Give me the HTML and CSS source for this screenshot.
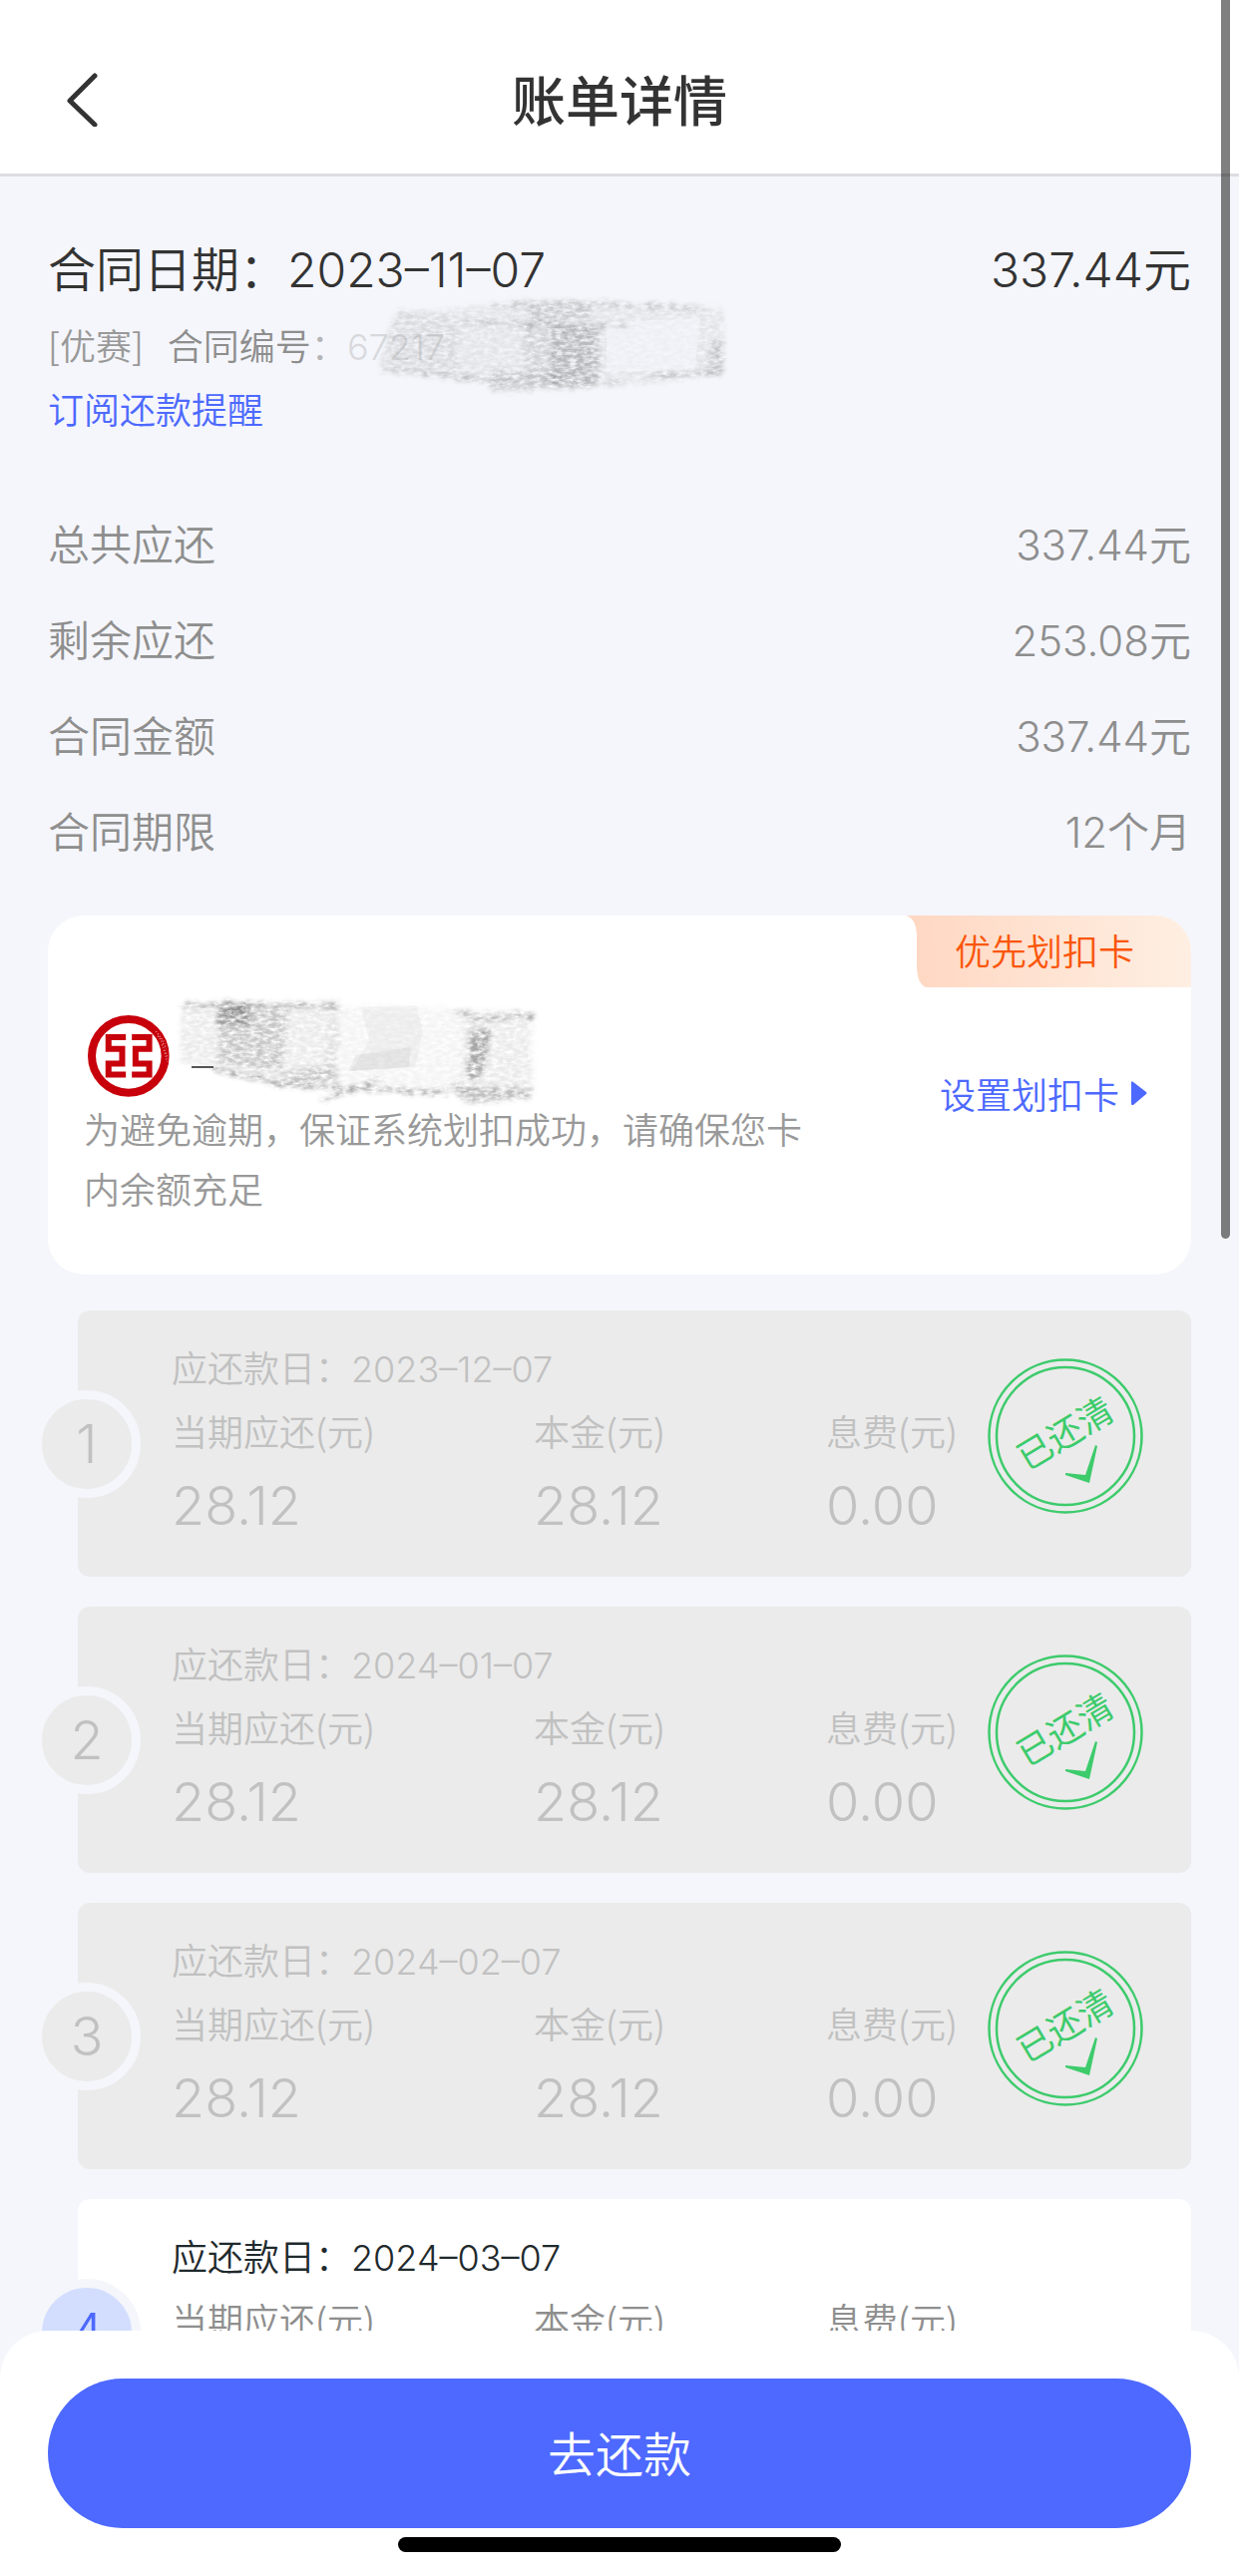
FILE: index.html
```html
<!DOCTYPE html>
<html lang="zh-CN">
<head>
<meta charset="utf-8">
<meta name="viewport" content="width=device-width, initial-scale=1">
<title>账单详情</title>
<link rel="stylesheet" href="styles.css">
</head>
<body>
<svg class="defs" width="0" height="0" aria-hidden="true">
  <defs>
    <filter id="pencil" x="-5%" y="-10%" width="110%" height="120%">
      <feTurbulence type="fractalNoise" baseFrequency="0.14 0.3" numOctaves="4" seed="7" result="grain"/>
      <feColorMatrix in="grain" type="matrix" values="0 0 0 0 0  0 0 0 0 0  0 0 0 0 0  0 0 0 2 -0.35" result="mask"/>
      <feDisplacementMap in="SourceGraphic" in2="grain" scale="12" xChannelSelector="R" yChannelSelector="G" result="rough"/>
      <feGaussianBlur in="rough" stdDeviation="2" result="soft"/>
      <feComposite in="soft" in2="mask" operator="in"/>
    </filter>
    <symbol id="stamp" viewBox="0 0 156 156">
      <g fill="none" stroke="#3dcb6c" stroke-width="2.5">
        <circle cx="78" cy="78" r="76.5"/>
        <circle cx="78" cy="78" r="69"/>
      </g>
      <text class="stamp-text" x="78" y="88" text-anchor="middle" transform="rotate(-31 78 76)">已还清</text>
      <path fill="#3dcb6c" d="M78 115 98 117 108 87 110 88 102 125 78 117Z"/>
    </symbol>
  </defs>
</svg>
<div class="app">
  <header class="navbar">
    <button class="back" type="button" aria-label="返回">
      <svg width="32" height="56" viewBox="0 0 32 56"><path d="M29 5 4 30 29 54" fill="none" stroke="#333" stroke-width="5" stroke-linecap="round" stroke-linejoin="round"/></svg>
    </button>
    <h1>账单详情</h1>
  </header>

  <main class="content">
    <section class="contract">
      <div class="contract-head"><span>合同日期：<span class="num">2023–11–07</span></span><span><span class="num">337.44</span>元</span></div>
      <div class="contract-no">
        <span class="vendor">[优赛]</span><span>合同编号<span class="faded">：<span class="num hidden-no">67217</span></span></span>
        <svg class="scribble scribble-no" width="430" height="110" viewBox="0 0 430 110" aria-hidden="true">
          <g filter="url(#pencil)" fill="#909090">
            <path opacity=".18" d="M32 20 180 8 362 16 362 80 290 92 130 93 16 76Z"/>
            <path opacity=".12" d="M32 18 96 26 96 82 16 78Z"/>
            <path opacity=".3" d="M165 14 228 10 228 24 165 32Z"/>
            <path opacity=".5" d="M190 34 236 32 236 92 186 94Z"/>
            <path opacity=".22" d="M160 32 200 28 192 84 162 82Z"/>
            <path opacity=".38" d="M130 80 200 82 198 94 126 96Z"/>
            <path opacity=".35" d="M350 50 362 48 360 82 344 82Z"/>
          </g>
          <path fill="#f5f6fb" opacity=".6" d="M244 30 338 26 332 78 244 80Z"/>
          <path filter="url(#pencil)" d="M130 14 200 10 340 16M20 78 130 88M128 98 260 92M100 30 270 34M290 84 358 81" fill="none" stroke="#888" stroke-width="3" opacity=".45"/>
        </svg>
      </div>
      <a class="remind" href="#remind">订阅还款提醒</a>
    </section>

    <dl class="details">
      <div><dt>总共应还</dt><dd><span class="num">337.44</span>元</dd></div>
      <div><dt>剩余应还</dt><dd><span class="num">253.08</span>元</dd></div>
      <div><dt>合同金额</dt><dd><span class="num">337.44</span>元</dd></div>
      <div><dt>合同期限</dt><dd><span class="num">12</span>个月</dd></div>
    </dl>

    <section class="bank">
      <div class="bank-info">
        <div class="bank-name">
          <svg class="bank-logo" width="82" height="82" viewBox="0 0 245 245" role="img" aria-label="银行标志">
            <circle cx="122" cy="122" r="110" fill="#fff" stroke="#c7000b" stroke-width="24"/>
            <path d="M114 66H62V101H103V145H62V178H114M132 66H184V101H143V145H184V178H132" fill="none" stroke="#c7000b" stroke-width="18"/>
            <path d="M204 48 232 84 M210 62 236 100M222 88 240 126M228 104 238 140" stroke="#fff" stroke-width="4" stroke-dasharray="3 6" opacity=".6"/>
          </svg>
          <svg class="scribble scribble-name" width="380" height="120" viewBox="0 0 380 120" aria-hidden="true">
            <g filter="url(#pencil)" fill="#666">
              <path opacity=".14" d="M10 12 168 10 166 90 110 96 40 76 8 72Z"/>
              <path opacity=".26" d="M46 18 80 12 116 22 110 80 46 72Z"/>
              <path opacity=".55" d="M46 18 78 12 78 34 46 34Z"/>
              <path opacity=".07" d="M160 14 360 20 362 104 250 102 150 92Z"/>
              <path opacity=".28" d="M110 80 164 76 166 90 114 92Z"/>
              <path opacity=".5" d="M300 38 320 38 316 66 308 88 296 88Z"/>
              <path opacity=".4" d="M276 94 362 98 360 108 296 112Z"/>
              <path opacity=".08" d="M290 22 362 20 360 100 290 100Z"/>
            </g>
            <g fill="#aaa">
              <path opacity=".1" d="M190 16 245 14 252 40 244 76 180 80 198 50Z"/>
              <path opacity=".15" d="M184 64 240 56 238 76 178 80Z"/>
            </g>
            <path filter="url(#pencil)" d="M10 14 168 15M54 8 70 18M40 78 116 94 276 102M150 110 212 88M284 20 300 22M302 28 364 24" fill="none" stroke="#555" stroke-width="3" opacity=".6"/>
            <path d="M20 76H42" stroke="#555" stroke-width="2"/>
          </svg>
        </div>
        <p>为避免逾期，保证系统划扣成功，请确保您卡内余额充足</p>
      </div>
      <a class="bank-set" href="#bank">设置划扣卡<svg width="16" height="24" viewBox="0 0 16 24" aria-hidden="true"><path fill="#4d69ff" d="M0 2Q0-1 2 1L15 11Q16 12 15 13L2 24Q0 25 0 22Z"/></svg></a>
      <div class="bank-tag">
        <svg class="tag-shape" viewBox="0 0 286 72" preserveAspectRatio="none" aria-hidden="true">
          <defs><linearGradient id="tag"><stop offset="0" stop-color="#ffd7c2"/><stop offset="1" stop-color="#feefe2"/></linearGradient></defs>
          <path fill="url(#tag)" d="M0 0H286V72H20Q11 68 11 50V22Q11 3 0 0Z"/>
        </svg>
        <span>优先划扣卡</span>
      </div>
    </section>

    <ol class="plan">
      <li class="term paid">
        <span class="index num">1</span>
        <h2>应还款日：<span class="num">2023–12–07</span></h2>
        <dl>
          <div><dt>当期应还(元)</dt><dd class="amount">28.12</dd></div>
          <div><dt>本金(元)</dt><dd class="amount">28.12</dd></div>
          <div><dt>息费(元)</dt><dd class="amount">0.00</dd></div>
        </dl>
        <svg class="stamp" role="img" aria-label="已还清"><use href="#stamp"/></svg>
      </li>
      <li class="term paid">
        <span class="index num">2</span>
        <h2>应还款日：<span class="num">2024–01–07</span></h2>
        <dl>
          <div><dt>当期应还(元)</dt><dd class="amount">28.12</dd></div>
          <div><dt>本金(元)</dt><dd class="amount">28.12</dd></div>
          <div><dt>息费(元)</dt><dd class="amount">0.00</dd></div>
        </dl>
        <svg class="stamp" role="img" aria-label="已还清"><use href="#stamp"/></svg>
      </li>
      <li class="term paid">
        <span class="index num">3</span>
        <h2>应还款日：<span class="num">2024–02–07</span></h2>
        <dl>
          <div><dt>当期应还(元)</dt><dd class="amount">28.12</dd></div>
          <div><dt>本金(元)</dt><dd class="amount">28.12</dd></div>
          <div><dt>息费(元)</dt><dd class="amount">0.00</dd></div>
        </dl>
        <svg class="stamp" role="img" aria-label="已还清"><use href="#stamp"/></svg>
      </li>
      <li class="term">
        <span class="index num">4</span>
        <h2>应还款日：<span class="num">2024–03–07</span></h2>
        <dl>
          <div><dt>当期应还(元)</dt></div>
          <div><dt>本金(元)</dt></div>
          <div><dt>息费(元)</dt></div>
        </dl>
      </li>
    </ol>
  </main>

  <footer class="paybar">
    <button class="pay" type="button">去还款</button>
    <div class="home-indicator"></div>
  </footer>
  <div class="scroll-thumb"></div>
</div>
</body>
</html>
```

FILE: styles.css
```css
* { box-sizing: border-box; margin: 0; padding: 0; }

body {
  background: #f5f6fb;
  color: #333;
  font-family: "Noto Sans CJK SC", sans-serif;
  font-weight: 350;
  font-size: 36px;
  line-height: 64px;
}

a { color: #4d69ff; text-decoration: none; }
button { border: 0; background: none; font: inherit; cursor: pointer; }
.num, .amount { font-family: Inter, "Noto Sans CJK SC", sans-serif; font-weight: 350; }
.num { line-height: 1; }
.defs { position: absolute; }

.app { position: relative; height: 100vh; overflow: hidden; }

/* navigation bar */
.navbar {
  display: grid;
  grid-template-columns: 1fr auto 1fr;
  align-items: center;
  padding: 57px 66px 33px;
  background: #fff;
  border-bottom: 3px solid #dcdde1;
}
.navbar h1 { font-size: 54px; line-height: 84px; font-weight: 500; }
.back { justify-self: start; display: flex; }

/* contract summary */
.content { padding: 54px 48px 0; }
.contract-head {
  display: flex;
  justify-content: space-between;
  margin-bottom: 10px;
  font-size: 48px;
  line-height: 72px;
}
.contract-no { position: relative; display: flex; gap: 24px; color: #8e8e8e; }
.vendor { color: #999; }
.faded { color: #b4b4b6; }
.hidden-no { color: #d8d9dc; }
.scribble { position: absolute; }
.scribble-no { left: 316px; top: -20px; }
.remind { display: block; }

.details { margin: 55px 0 38px; color: #8e8e8e; font-size: 42px; line-height: 96px; }
.details div { display: flex; justify-content: space-between; }

/* deduction card */
.bank {
  position: relative;
  display: flex;
  justify-content: space-between;
  align-items: center;
  padding: 100px 44px 57px 36px;
  margin-bottom: 36px;
  background: #fff;
  border-radius: 36px;
  overflow: hidden;
}
.bank-info { max-width: 730px; color: #999; line-height: 60px; }
.bank-name { position: relative; height: 83px; padding-left: 4px; }
.bank-logo { display: block; }
.scribble-name { left: 88px; top: -24px; }
.bank-set { display: flex; align-items: center; gap: 12px; align-self: stretch; margin: -100px 0 -53px; }
.bank-tag {
  position: absolute;
  top: 0;
  right: 0;
  width: 286px;
  height: 72px;
  padding-left: 49px;
  color: #fb560a;
  line-height: 68px;
}
.tag-shape { position: absolute; inset: 0; width: 100%; height: 100%; }
.bank-tag span { position: relative; }

/* repayment plan */
.plan { display: grid; gap: 30px; padding-left: 30px; list-style: none; }
.term {
  position: relative;
  min-height: 267px;
  padding: 24px 0 27px 94px;
  background: #fff;
  border-radius: 12px;
}
.term h2 { font-size: 36px; font-weight: 350; color: #1f2a2d; }
.term dl { display: grid; grid-template-columns: 363fr 293fr 366fr; }
.term dt { color: #8e8e8e; }
.amount { font-size: 54px; line-height: 88px; }
.index {
  position: absolute;
  left: -45px;
  top: 80px;
  width: 108px;
  height: 108px;
  border: 9px solid #f5f6fb;
  border-radius: 50%;
  background: #d3deff;
  color: #4d69ff;
  font-size: 54px;
  line-height: 90px;
  text-align: center;
}
.paid { background: #ebebeb; }
.paid h2, .paid dt, .paid dd, .paid .index { color: #c1c1c1; }
.paid .index { background: #ebebeb; }
.stamp { position: absolute; right: 48px; top: 48px; width: 156px; height: 156px; }
.stamp-text { fill: #3dcb6c; font-size: 35px; font-weight: 400; }

/* bottom action */
.paybar {
  position: fixed;
  left: 0;
  right: 0;
  bottom: 0;
  padding: 48px 48px 24px;
  background: #fff;
  border-radius: 48px 48px 0 0;
}
.pay {
  display: block;
  width: 100%;
  height: 150px;
  padding-bottom: 4px;
  border-radius: 75px;
  background: #4d69ff;
  color: #fff;
  font-size: 48px;
}
.home-indicator { width: 444px; height: 15px; margin: 9px auto 0; border-radius: 8px; background: #000; }

.scroll-thumb {
  position: fixed;
  top: -8px;
  right: 9px;
  width: 9px;
  height: 1250px;
  border-radius: 5px;
  background: rgba(0, 0, 0, .5);
}
```
